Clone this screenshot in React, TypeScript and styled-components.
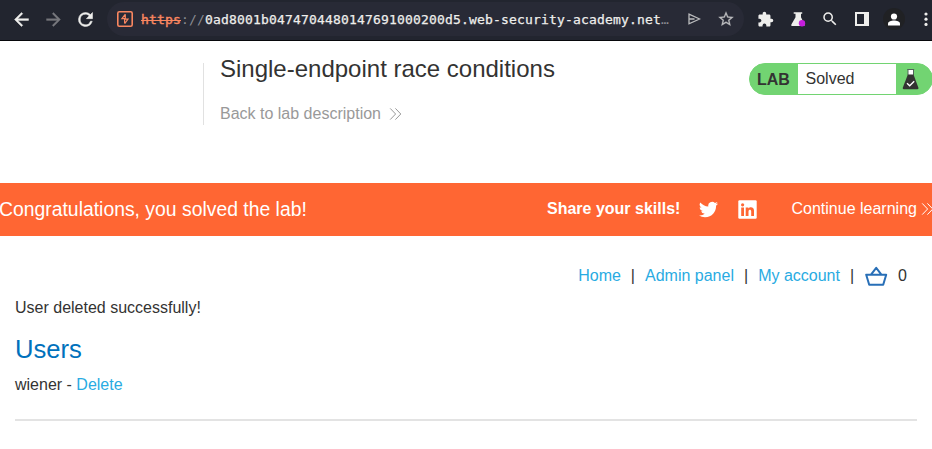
import React from "react";
import styled, { createGlobalStyle } from "styled-components";

const GlobalStyle = createGlobalStyle`
  *, *::before, *::after { box-sizing: border-box; }
  html, body { margin: 0; padding: 0; background: #fff; overflow: hidden; }
  body { font-family: "Liberation Sans", Arial, sans-serif; font-size: 16px; color: #333332; }
  svg { display: block; flex: none; }
`;

const Page = styled.div`
  width: 932px;
  height: 449px;
  overflow: hidden;
  display: flex;
  flex-direction: column;
`;

const Toolbar = styled.header`
  display: flex;
  flex: none;
  align-items: center;
  height: 41px;
  padding: 0 0 2px 11px;
  background: #22252f;
  border-bottom: 1px solid #07080b;
`;

const ToolButton = styled.button<{ $gap?: number; $color?: string }>`
  display: flex;
  flex: none;
  padding: 0;
  border: 0;
  background: none;
  color: ${(p) => p.$color ?? "#eeeeec"};
  margin-left: ${(p) => p.$gap ?? 0}px;
`;

const AddressBar = styled.div`
  display: flex;
  flex: none;
  align-items: center;
  width: 637px;
  height: 34px;
  margin-left: 11px;
  padding-left: 10px;
  border-radius: 17px;
  background: #282a36;
`;

const Url = styled.div`
  flex: none;
  width: 547px;
  margin-left: 8px;
  padding-top: 1px;
  white-space: nowrap;
  font: 13px/18px "DejaVu Sans Mono", monospace;
  letter-spacing: 0.174px;
  color: #eeeeec;
  -webkit-text-stroke: 0.25px currentColor;
`;

const Scheme = styled.span`
  color: #f98760;
  text-decoration: line-through;
  text-decoration-thickness: 1px;
  -webkit-text-stroke: 0.4px #f98760;
`;

const Muted = styled.span`
  color: #8c8d93;
  -webkit-text-stroke: 0;
`;

const Avatar = styled.span`
  display: flex;
  align-items: center;
  justify-content: center;
  width: 22px;
  height: 22px;
  border-radius: 50%;
  background: #202124;
`;

const LabHeader = styled.section`
  display: flex;
  flex: none;
  align-items: flex-start;
  justify-content: space-between;
  height: 142px;
  padding: 22px 0 0 203px;
`;

const LabInfo = styled.div`
  height: 62px;
  padding-left: 16px;
  border-left: 1px solid #e1e1e1;
`;

const LabTitle = styled.h2`
  margin: -8px 0 0;
  font-size: 24px;
  line-height: 28px;
  font-weight: 400;
`;

const BackLink = styled.a`
  display: flex;
  align-items: center;
  gap: 8px;
  margin-top: 21px;
  line-height: 20px;
  color: #999;
`;

const StatusBadge = styled.div`
  display: flex;
  width: 184px;
  height: 32px;
  margin-right: -1px;
  border: 1px solid #72d472;
  border-radius: 16px;
  background: #72d472;
  line-height: 30px;
  overflow: hidden;
`;

const StatusTag = styled.strong`
  width: 48px;
  padding: 1px 0 0 7px;
`;

const StatusText = styled.span`
  width: 98px;
  padding-left: 7.5px;
  background: #fff;
`;

const StatusIcon = styled.span`
  padding: 5px 0 0 6px;
`;

const Banner = styled.section`
  display: flex;
  flex: none;
  align-items: center;
  height: 53px;
  padding-bottom: 1px;
  background: #ff6633;
  color: #fff;
  white-space: nowrap;
`;

const Congrats = styled.h4`
  flex: none;
  width: 547px;
  margin: 0 0 0 -1px;
  font-size: 19.36px;
  line-height: 24px;
  font-weight: 400;
`;

const Share = styled.div`
  display: flex;
  flex: none;
  align-items: center;
  width: 245px;
  padding-left: 1px;
  line-height: 20px;
`;

const Social = styled.span<{ $gap: number }>`
  margin-left: ${(p) => p.$gap}px;
`;

const Continue = styled.a`
  display: flex;
  flex: none;
  align-items: center;
  gap: 4px;
  margin-left: 0.5px;
  line-height: 20px;
`;

const Content = styled.main`
  padding: 0 15px;
`;

const Nav = styled.nav`
  display: flex;
  align-items: center;
  justify-content: flex-end;
  gap: 10px;
  padding: 30px 10px 0 0;
  line-height: 20px;
`;

const Basket = styled.span`
  margin-left: 1px;
`;

const Link = styled.a`
  color: #29abe2;
`;

const Text = styled.p`
  margin: 0;
  line-height: 20px;
`;

const Message = styled(Text)`
  margin-top: 12px;
`;

const Heading = styled.h1`
  margin: 16px 0 0;
  font-size: 25.6px;
  line-height: 30px;
  font-weight: 400;
  color: #0071bc;
`;

const UserRow = styled(Text)`
  margin-top: 11px;
`;

const Divider = styled.hr`
  height: 2px;
  margin: 24px 0 0;
  border: 0;
  background: #e3e3e3;
`;

const MaterialIcon = ({ d, size = 20, weight = 0 }: { d: string; size?: number; weight?: number }) => (
  <svg width={size} height={size} viewBox="0 0 24 24" fill="currentColor" stroke="currentColor" strokeWidth={weight}>
    <path d={d} />
  </svg>
);

const Chevrons = () => (
  <svg width="13" height="14" viewBox="0 0 13 14" fill="none" stroke="currentColor" strokeWidth="1">
    <path d="M1.2 1.4 6.6 7l-5.4 5.6M6.4 1.4 11.8 7l-5.4 5.6" />
  </svg>
);

const BurpIcon = () => (
  <svg width="16" height="16" viewBox="0 0 16 16" fill="none" stroke="#f98760">
    <rect x=".8" y=".8" width="14.4" height="14.4" rx="1.5" strokeWidth="1.6" />
    <path d="M8.4 3.2 4.9 7.7H8M8.3 3.4v4.3M8 8.2h3L7.7 12.6M7.6 8.2v4.3" strokeWidth="1.2" />
  </svg>
);

const SendIcon = () => (
  <svg width="13" height="12" viewBox="0 0 13 12" fill="none" stroke="currentColor" strokeWidth="1.3">
    <path d="M1 1.2 11.6 6 1 10.8zM1 6h5.5" />
  </svg>
);

const FlaskExtension = () => (
  <svg width="15" height="15" viewBox="0 0 15 15">
    <path d="M2.7.2h8.5v1.5H10v3.5l3.5 7q.7 1.8-1 1.8H1.5q-1.8 0-1-1.8l4-7V1.7H2.7z" fill="#eeeeec" />
    <circle cx="11" cy="11.2" r="3.2" fill="#c61edc" />
  </svg>
);

const PanelIcon = () => (
  <svg width="14" height="14" viewBox="0 0 14 14">
    <path fillRule="evenodd" fill="currentColor" d="M0 0h14v14H0zM2 2v10h7V2z" />
  </svg>
);

const PersonIcon = () => (
  <svg width="14" height="13" viewBox="0 0 14 13" fill="#fff">
    <circle cx="7" cy="3.5" r="3.1" />
    <path d="M1 12.5v-1.8C1 8.6 4.4 7.6 7 7.6s6 1 6 3.1v1.8z" />
  </svg>
);

const DotsIcon = () => (
  <svg width="4" height="14" viewBox="0 0 4 14" fill="currentColor">
    <circle cx="2" cy="2" r="1.6" />
    <circle cx="2" cy="7.2" r="1.6" />
    <circle cx="2" cy="12.4" r="1.6" />
  </svg>
);

const LabFlask = () => (
  <svg width="17" height="21" viewBox="0 0 17 21">
    <path d="M6 1h5.5v5H6z" fill="#fff" />
    <path d="M5.2.5h7M6 1v5M11.5 1v5" stroke="#52635a" />
    <path d="M5.8 5.5h5.7l4.9 13.2q.4 1.6-1.2 1.6H2q-1.6 0-1.2-1.6z" fill="#333332" />
    <path d="m5 14.2 2.7 2.5 4.5-4.4" fill="none" stroke="#fff" strokeWidth="1.4" />
  </svg>
);

const LinkedInIcon = () => (
  <svg width="19" height="19" viewBox="0 0 19 19">
    <rect x=".3" y=".3" width="18.4" height="18.4" rx="1.2" fill="#fff" />
    <g fill="#ff6633">
      <circle cx="4.6" cy="4.8" r="1.6" />
      <path d="M3.2 7.4H6V16H3.2zM7.7 7.4h2.7v1.2c1.3-2.1 5.6-1.9 5.6 2V16h-2.8v-4.6c0-2.3-2.7-2-2.7 0V16H7.7z" />
    </g>
  </svg>
);

const BasketIcon = () => (
  <svg width="23" height="20" viewBox="0 0 23 20" fill="none" stroke="#286fb7" strokeWidth="2" strokeLinejoin="round">
    <path d="M1.2 8.8h20l-3 10H4.2zM6 8.7l5.2-6.9 5.2 6.9" />
  </svg>
);

const PATHS = {
  back: "M20 11H7.83l5.59-5.59L12 4l-8 8 8 8 1.41-1.41L7.83 13H20v-2z",
  forward: "M4 13h12.17l-5.59 5.59L12 20l8-8-8-8-1.41 1.41L16.17 11H4v2z",
  reload:
    "M17.65 6.35A7.96 7.96 0 0 0 12 4a8 8 0 1 0 7.73 10h-2.08A6 6 0 1 1 12 6c1.66 0 3.14.69 4.22 1.78L13 11h7V4z",
  star: "M22 9.24l-7.19-.62L12 2 9.19 8.63 2 9.24l5.46 4.73L5.82 21 12 17.27 18.18 21l-1.63-7.03L22 9.24zM12 15.4l-3.76 2.27 1-4.28-3.32-2.88 4.38-.38L12 6.1l1.71 4.04 4.38.38-3.32 2.88 1 4.28L12 15.4z",
  puzzle:
    "M20.5 11H19V7c0-1.1-.9-2-2-2h-4V3.5a2.5 2.5 0 0 0-5 0V5H4c-1.1 0-1.99.9-1.99 2v3.8H3.5c1.49 0 2.7 1.21 2.7 2.7s-1.21 2.7-2.7 2.7H2V20c0 1.1.9 2 2 2h3.8v-1.5c0-1.49 1.21-2.7 2.7-2.7s2.7 1.21 2.7 2.7V22H17c1.1 0 2-.9 2-2v-4h1.5a2.5 2.5 0 0 0 0-5z",
  search:
    "M15.5 14h-.79l-.28-.27A6.47 6.47 0 0 0 16 9.5 6.5 6.5 0 1 0 9.5 16c1.61 0 3.09-.59 4.23-1.57l.27.28v.79l5 4.99L20.49 19l-4.99-5zm-6 0C7.01 14 5 11.99 5 9.5S7.01 5 9.5 5 14 7.01 14 9.5 11.99 14 9.5 14z",
  twitter:
    "M23.95 4.57a10 10 0 0 1-2.82.77 4.96 4.96 0 0 0 2.16-2.72c-.95.55-2 .95-3.13 1.18a4.92 4.92 0 0 0-8.38 4.48C7.69 8.09 4.07 6.13 1.64 3.16a4.92 4.92 0 0 0 1.52 6.57 4.9 4.9 0 0 1-2.23-.61v.06a4.92 4.92 0 0 0 3.95 4.83 5 5 0 0 1-2.21.08 4.94 4.94 0 0 0 4.6 3.42A9.87 9.87 0 0 1 0 19.54a13.99 13.99 0 0 0 7.55 2.21c9.05 0 14-7.5 14-13.98 0-.21 0-.42-.02-.63a9.94 9.94 0 0 0 2.46-2.55z",
};

export default function App() {
  return (
    <Page>
      <GlobalStyle />
      <Toolbar>
        <ToolButton aria-label="Back"><MaterialIcon d={PATHS.back} size={21} weight={0.5} /></ToolButton>
        <ToolButton aria-label="Forward" $gap={11} $color="#77787d"><MaterialIcon d={PATHS.forward} size={21} weight={0.4} /></ToolButton>
        <ToolButton aria-label="Reload" $gap={11}><MaterialIcon d={PATHS.reload} size={21} weight={0.6} /></ToolButton>
        <AddressBar>
          <BurpIcon />
          <Url>
            <Scheme>https</Scheme>
            <Muted>://</Muted>
            0ad8001b0474704480147691000200d5.web-security-academy.net
            <Muted>…</Muted>
          </Url>
          <ToolButton aria-label="Share" $color="#bbbcbe"><SendIcon /></ToolButton>
          <ToolButton aria-label="Bookmark" $gap={16} $color="#bbbcbe"><MaterialIcon d={PATHS.star} size={18} weight={0.3} /></ToolButton>
        </AddressBar>
        <ToolButton aria-label="Extensions" $gap={13}><MaterialIcon d={PATHS.puzzle} size={17} /></ToolButton>
        <ToolButton aria-label="Lab extension" $gap={17}><FlaskExtension /></ToolButton>
        <ToolButton aria-label="Search" $gap={15}><MaterialIcon d={PATHS.search} size={18} /></ToolButton>
        <ToolButton aria-label="Side panel" $gap={16}><PanelIcon /></ToolButton>
        <ToolButton aria-label="Profile" $gap={14}><Avatar><PersonIcon /></Avatar></ToolButton>
        <ToolButton aria-label="Menu" $gap={19}><DotsIcon /></ToolButton>
      </Toolbar>
      <LabHeader>
        <LabInfo>
          <LabTitle>Single-endpoint race conditions</LabTitle>
          <BackLink>Back to lab description <Chevrons /></BackLink>
        </LabInfo>
        <StatusBadge>
          <StatusTag>LAB</StatusTag>
          <StatusText>Solved</StatusText>
          <StatusIcon><LabFlask /></StatusIcon>
        </StatusBadge>
      </LabHeader>
      <Banner>
        <Congrats>Congratulations, you solved the lab!</Congrats>
        <Share>
          <strong>Share your skills!</strong>
          <Social $gap={19}><MaterialIcon d={PATHS.twitter} size={19} /></Social>
          <Social $gap={20}><LinkedInIcon /></Social>
        </Share>
        <Continue>Continue learning <Chevrons /></Continue>
      </Banner>
      <Content>
        <Nav>
          <Link>Home</Link><span>|</span>
          <Link>Admin panel</Link><span>|</span>
          <Link>My account</Link><span>|</span>
          <Basket><BasketIcon /></Basket>
          <span>0</span>
        </Nav>
        <Message>User deleted successfully!</Message>
        <Heading>Users</Heading>
        <UserRow>wiener - <Link>Delete</Link></UserRow>
        <Divider />
      </Content>
    </Page>
  );
}
